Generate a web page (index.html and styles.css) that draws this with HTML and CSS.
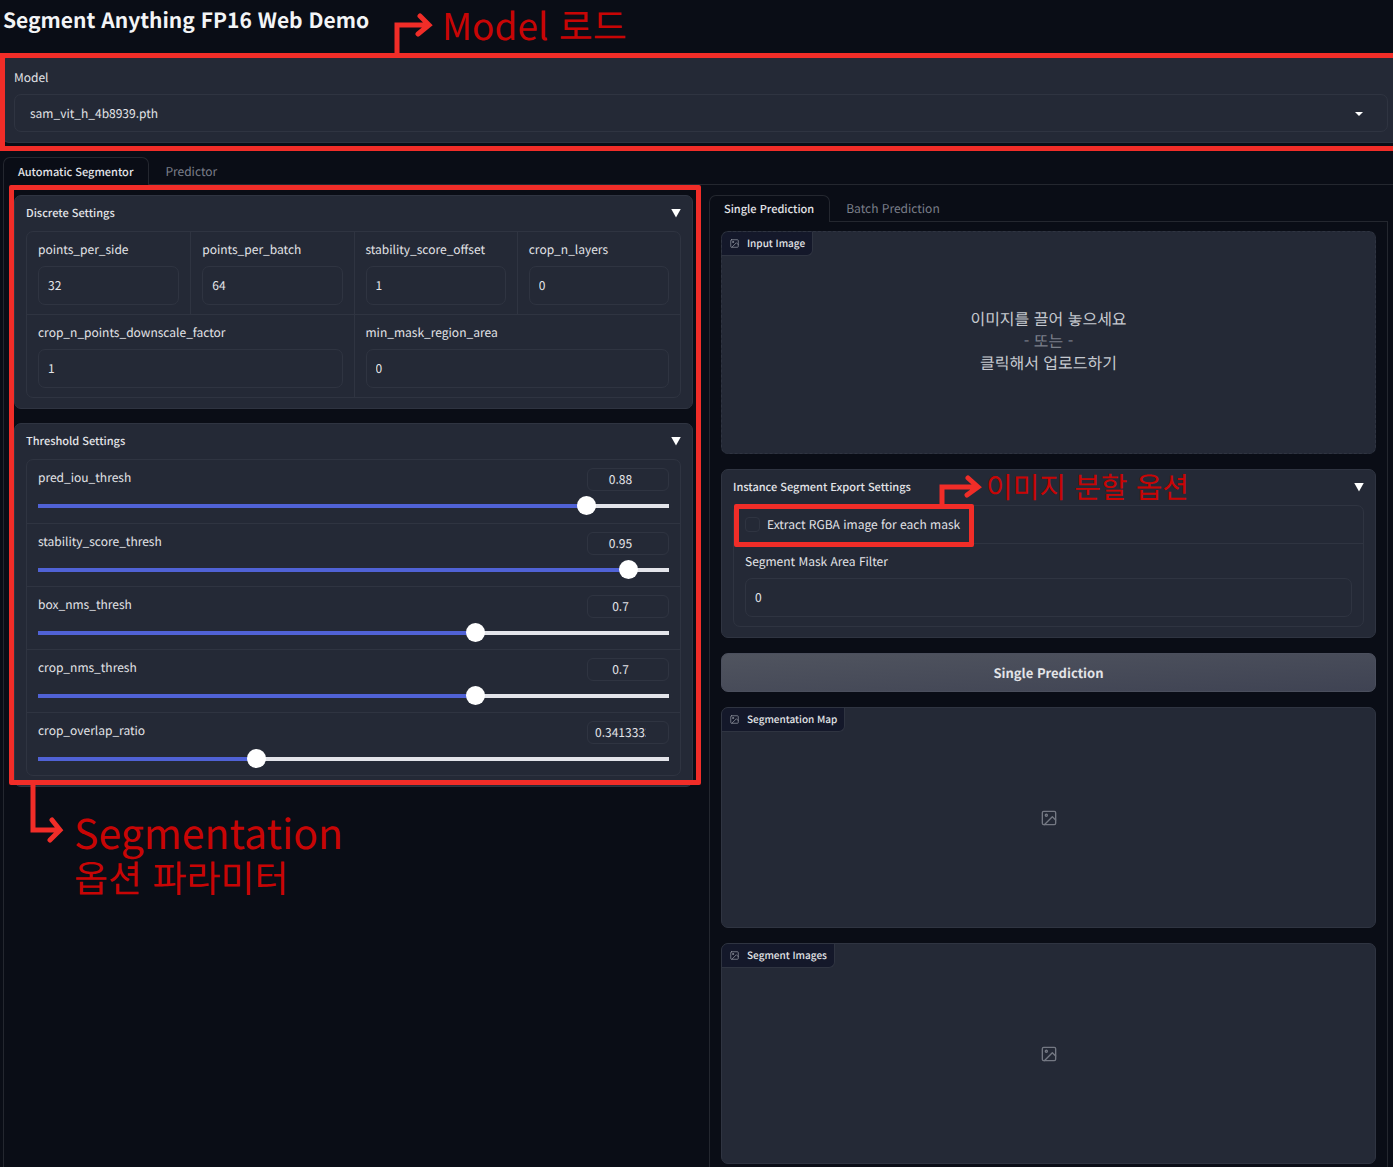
FILE: index.html
```html
<!DOCTYPE html>
<html lang="ko">
<head>
<meta charset="utf-8">
<meta name="viewport" content="width=device-width, initial-scale=1">
<title>Segment Anything FP16 Web Demo</title>
<link rel="stylesheet" href="styles.css">
</head>
<body>
<svg class="defs" aria-hidden="true">
  <symbol id="picture" viewBox="0 0 24 24">
    <g fill="none" stroke="currentColor" stroke-width="2" stroke-linecap="round" stroke-linejoin="round">
      <rect x="2" y="2" width="20" height="20" rx="2"/>
      <circle cx="8" cy="8" r="1.6"/>
      <path d="M22 15l-5-5L5 22"/>
    </g>
  </symbol>
</svg>

<header class="page-head">
  <h1>Segment Anything FP16 Web Demo</h1>
  <svg class="arrow arrow-model" viewBox="0 0 40 42" aria-hidden="true"><path d="M4 42V12H34M27 3l9 9-11 9"/></svg>
  <p class="note note-model">Model 로드</p>
</header>

<main>
  <section class="model">
    <label for="model">Model</label>
    <div class="select-wrap">
      <select id="model"><option>sam_vit_h_4b8939.pth</option></select>
      <svg class="caret" viewBox="0 0 8 4" aria-hidden="true"><path d="M0 0h8L4 4z"/></svg>
    </div>
  </section>

  <nav class="tabs">
    <button type="button" class="tab active">Automatic Segmentor</button>
    <button type="button" class="tab">Predictor</button>
  </nav>

  <div class="panel outer-panel">
    <div class="left">
      <details class="card" open>
        <summary>Discrete Settings</summary>
        <div class="form grid">
          <div class="field"><label for="pps">points_per_side</label><input id="pps" type="number" value="32"></div>
          <div class="field"><label for="ppb">points_per_batch</label><input id="ppb" type="number" value="64"></div>
          <div class="field"><label for="sso">stability_score_offset</label><input id="sso" type="number" value="1"></div>
          <div class="field"><label for="cnl">crop_n_layers</label><input id="cnl" type="number" value="0"></div>
          <div class="field wide"><label for="cnp">crop_n_points_downscale_factor</label><input id="cnp" type="number" value="1"></div>
          <div class="field wide"><label for="mmr">min_mask_region_area</label><input id="mmr" type="number" value="0"></div>
        </div>
      </details>

      <details class="card" open>
        <summary>Threshold Settings</summary>
        <div class="form">
          <div class="slider">
            <div class="slider-head"><label for="t1">pred_iou_thresh</label><input type="number" step="any" value="0.88" aria-label="pred_iou_thresh value"></div>
            <input id="t1" type="range" min="0" max="1" step="any" value="0.88" style="--fill:88%">
          </div>
          <div class="slider">
            <div class="slider-head"><label for="t2">stability_score_thresh</label><input type="number" step="any" value="0.95" aria-label="stability_score_thresh value"></div>
            <input id="t2" type="range" min="0" max="1" step="any" value="0.95" style="--fill:95%">
          </div>
          <div class="slider">
            <div class="slider-head"><label for="t3">box_nms_thresh</label><input type="number" step="any" value="0.7" aria-label="box_nms_thresh value"></div>
            <input id="t3" type="range" min="0" max="1" step="any" value="0.7" style="--fill:70%">
          </div>
          <div class="slider">
            <div class="slider-head"><label for="t4">crop_nms_thresh</label><input type="number" step="any" value="0.7" aria-label="crop_nms_thresh value"></div>
            <input id="t4" type="range" min="0" max="1" step="any" value="0.7" style="--fill:70%">
          </div>
          <div class="slider">
            <div class="slider-head"><label for="t5">crop_overlap_ratio</label><input type="number" step="any" value="0.3413333333" aria-label="crop_overlap_ratio value"></div>
            <input id="t5" type="range" min="0" max="1" step="any" value="0.3413333333" style="--fill:34.13%">
          </div>
        </div>
      </details>
      <svg class="arrow arrow-params" viewBox="0 0 36 64" aria-hidden="true"><path d="M4 0V48H30M23 38l8 10-10 10"/></svg>
      <p class="note note-params">Segmentation<span>옵션 파라미터</span></p>
    </div>

    <div class="right">
      <nav class="tabs">
        <button type="button" class="tab active">Single Prediction</button>
        <button type="button" class="tab">Batch Prediction</button>
      </nav>
      <div class="panel inner-panel">
        <div class="image-box upload">
          <span class="tag"><svg><use href="#picture"/></svg>Input Image</span>
          <p class="drop">이미지를 끌어 놓으세요<span>- 또는 -</span>클릭해서 업로드하기</p>
        </div>

        <details class="card" open>
          <summary>Instance Segment Export Settings</summary>
          <div class="form">
            <div class="check-row">
              <label class="check"><input type="checkbox">Extract RGBA image for each mask</label>
              <svg class="arrow arrow-export" viewBox="0 0 46 30" aria-hidden="true"><path d="M4 30V12H38M30 3l10 9-11 8"/></svg>
              <p class="note note-export">이미지 분할 옵션</p>
            </div>
            <div class="field"><label for="area">Segment Mask Area Filter</label><input id="area" type="number" value="0"></div>
          </div>
        </details>

        <button type="button" class="run">Single Prediction</button>

        <div class="image-box">
          <span class="tag"><svg><use href="#picture"/></svg>Segmentation Map</span>
          <svg class="empty"><use href="#picture"/></svg>
        </div>
        <div class="image-box">
          <span class="tag"><svg><use href="#picture"/></svg>Segment Images</span>
          <svg class="empty"><use href="#picture"/></svg>
        </div>
      </div>
    </div>
  </div>
</main>
</body>
</html>
```
FILE: styles.css
```css
:root {
  --bg: #0a0d16;
  --card: #242936;
  --line: #2f3441;
  --edge: #24272f;
  --text: #e3e4e8;
  --muted: #7b7f8a;
  --mark: #f12d28;
  --note: #c80505;
}

*, *::before, *::after { box-sizing: border-box; }

body {
  margin: 0;
  min-height: 100vh;
  display: flex;
  flex-direction: column;
  overflow-x: hidden;
  background: var(--bg);
  color: var(--text);
  font: 12px/18px "Noto Sans CJK KR", "Noto Sans", sans-serif;
  text-rendering: geometricPrecision;
}

button, input, select { font: inherit; color: inherit; text-rendering: inherit; }
h1, p { margin: 0; }
.defs { position: absolute; width: 0; height: 0; }

.page-head { position: relative; height: 56px; padding: 4px 3px; }
h1 { font-size: 21px; line-height: 32px; font-weight: 700; color: #f3f4f6; }

main { flex: 1; display: flex; flex-direction: column; padding-left: 3px; }

/* model selector */
.model {
  position: relative;
  padding: 12px 5px 10px 10px;
  background: var(--card);
  border: 1px solid var(--line);
  border-right: 0;
  border-radius: 6px 0 0 6px;
}
.model label { display: block; margin-bottom: 7px; }
.model::before {
  content: "";
  position: absolute;
  inset: -4px 0 -9px -4px;
  border: 5px solid var(--mark);
  border-right: 0;
  pointer-events: none;
}
.select-wrap { position: relative; }
select {
  display: block;
  width: 100%;
  height: 38px;
  padding: 1px 15px 0;
  appearance: none;
  background: transparent;
  border: 1px solid var(--line);
  border-radius: 7px;
}
.caret { position: absolute; right: 25px; top: 18px; width: 8px; height: 4px; fill: #fff; }

/* tabs */
.tabs { display: flex; height: 27px; border-bottom: 1px solid var(--edge); }
main > .tabs { height: 28px; margin-top: 14px; }
.tab {
  padding: 0 15px;
  margin-bottom: -1px;
  border: 1px solid transparent;
  border-bottom: 0;
  border-radius: 7px 7px 0 0;
  background: transparent;
  color: var(--muted);
}
.tab.active {
  padding: 0 15px 0 14px;
  border-color: var(--edge);
  background: var(--bg);
  color: var(--text);
  font-size: 11px;
  font-weight: 500;
}

.panel { border-left: 1px solid var(--edge); }
.outer-panel { flex: 1; display: flex; gap: 16px; padding: 10px 5px 0 10px; }
.left, .right { flex: 1 1 0; min-width: 0; }
.right { display: flex; flex-direction: column; }
.inner-panel {
  flex: 1;
  display: flex;
  flex-direction: column;
  gap: 15px;
  padding: 9px 11px 4px;
  border-right: 1px solid var(--edge);
}
.left { position: relative; align-self: flex-start; display: flex; flex-direction: column; gap: 14px; }
.left::before {
  content: "";
  position: absolute;
  inset: -10px -8px 2px -5px;
  border: 5px solid var(--mark);
  border-radius: 2px;
  pointer-events: none;
}

/* collapsible cards */
.card {
  padding: 8px 11px 10px;
  background: var(--card);
  border: 1px solid var(--line);
  border-radius: 7px;
}
summary {
  display: flex;
  justify-content: space-between;
  align-items: center;
  margin-bottom: 9px;
  font-size: 11px;
  font-weight: 500;
  list-style: none;
}
summary::after {
  content: "";
  width: 10px;
  height: 9px;
  background: #fff;
  clip-path: polygon(0 0, 100% 0, 50% 100%);
}
.form { border: 1px solid var(--line); border-radius: 7px; }

.grid { display: grid; grid-template-columns: repeat(4, 1fr); }
.wide { grid-column: span 2; }
.grid .field { border-left: 1px solid var(--line); }
.grid .field:nth-child(1), .grid .field:nth-child(5) { border-left: 0; }
.wide { border-top: 1px solid var(--line); }
.field { padding: 9px 11px; }
.field label { display: block; margin-bottom: 7px; }
.field input {
  display: block;
  width: 100%;
  height: 39px;
  padding: 0 9px;
  background: transparent;
  border: 1px solid var(--line);
  border-radius: 7px;
}

/* sliders */
.slider { height: 63px; padding: 8px 11px 0; }
.slider + .slider { border-top: 1px solid var(--line); }
.slider-head { display: flex; justify-content: space-between; height: 23px; line-height: 20px; }
.slider-head input {
  width: 82px;
  height: 23px;
  padding: 0 7px;
  text-align: center;
  background: transparent;
  border: 1px solid var(--line);
  border-radius: 6px;
}
input[type="range"] {
  display: block;
  appearance: none;
  width: 100%;
  height: 19px;
  margin: 5px 0 0;
  background: linear-gradient(to right, #5062d6 var(--fill), #e3e4ea var(--fill)) center / 100% 4px no-repeat;
}
input[type="range"]::-webkit-slider-thumb {
  appearance: none;
  width: 19px;
  height: 19px;
  border-radius: 50%;
  background: #fff;
}

/* image areas */
.image-box {
  position: relative;
  display: flex;
  justify-content: center;
  align-items: center;
  height: 221px;
  background: var(--card);
  border: 1px solid var(--line);
  border-radius: 7px;
}
.upload { height: 223px; padding-bottom: 6px; border-style: dashed; }
.tag {
  position: absolute;
  left: 0;
  top: 0;
  display: flex;
  align-items: center;
  gap: 8px;
  height: 24px;
  padding: 0 7px 1px 8px;
  background: #14182a;
  border: 1px solid var(--line);
  border-width: 0 1px 1px 0;
  border-radius: 6px 0 6px 0;
  font-size: 10px;
  font-weight: 500;
}
.tag svg { width: 9px; height: 9px; color: #9195a0; }
.empty { width: 16px; height: 16px; color: #747883; }
.drop { text-align: center; font-size: 16px; line-height: 22px; color: #c6c9d0; }
.drop span { display: block; color: var(--muted); }

.check-row { position: relative; height: 38px; padding: 0 11px; border-bottom: 1px solid var(--line); display: flex; align-items: center; }
.check { display: flex; align-items: center; gap: 7px; }
.check input {
  appearance: none;
  width: 15px;
  height: 15px;
  margin: 0;
  border: 1px solid var(--line);
  border-radius: 4px;
}
.check-row::before {
  content: "";
  position: absolute;
  left: 0;
  top: -2px;
  width: 240px;
  height: 43px;
  border: 5px solid var(--mark);
  border-radius: 2px;
  pointer-events: none;
}

.run {
  height: 39px;
  border: 1px solid #4b4f5d;
  border-radius: 7px;
  background: linear-gradient(to bottom right, #50545f, #3f4353);
  font-size: 13px;
  font-weight: 700;
}

/* hand-made annotations */
.arrow {
  position: absolute;
  fill: none;
  stroke: var(--mark);
  stroke-width: 5;
  stroke-linecap: round;
}
.arrow path { stroke-linejoin: miter; }
.arrow-model { left: 393px; top: 13px; width: 40px; height: 42px; }
.arrow-params { left: 15px; top: 587px; width: 36px; height: 64px; }
.arrow-export { left: 204px; top: -31px; width: 46px; height: 30px; }
.note { position: absolute; color: var(--note); white-space: nowrap; font-weight: 400; }
.note-model { left: 442px; top: 3px; font-size: 37px; line-height: 42px; }
.note-params { left: 60px; top: 614px; font-size: 41px; line-height: 45px; }
.note-params span { display: block; font-size: 37px; }
.note-export { left: 252px; top: -38px; font-size: 29px; line-height: 36px; }
```
